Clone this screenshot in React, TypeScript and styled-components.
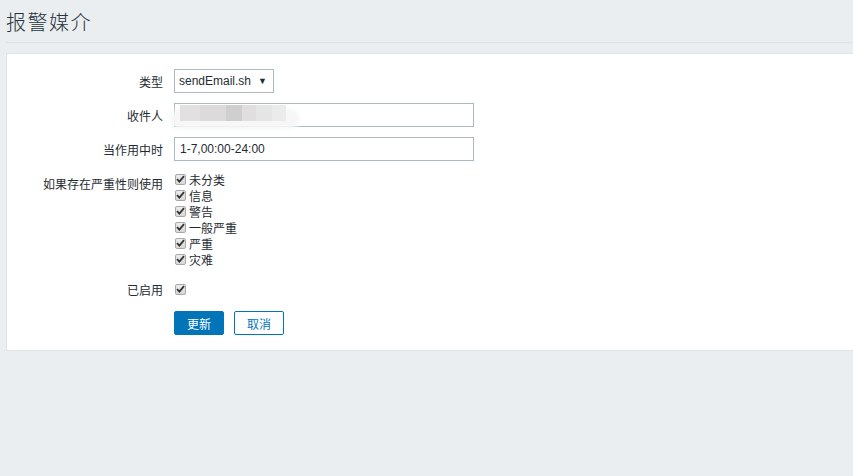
import React from "react";
import styled, { createGlobalStyle } from "styled-components";

const GlobalStyle = createGlobalStyle`
    html, body {
        margin: 0;
        padding: 0;
        background-color: #ebeef0;
    }
    body {
        font-family: Arial, "Liberation Sans", "Noto Sans CJK SC", sans-serif;
        font-size: 12px;
        color: #1f2c33;
    }
`;

const severities = ["未分类", "信息", "警告", "一般严重", "严重", "灾难"];

const CheckIcon = () => (
    <svg width="9" height="8" viewBox="0 0 9 8">
        <path d="M1 4.2 L3.4 6.6 L8 1.2" fill="none" stroke="#333" strokeWidth="1.8" />
    </svg>
);

const Checkbox = () => (
    <Box>
        <CheckIcon />
    </Box>
);

const App = () => {
    return (
        <>
            <GlobalStyle />
            <Page>
                <Header>
                    <Title>报警媒介</Title>
                </Header>
                <Panel>
                    <Form>
                        <Label>类型</Label>
                        <Field>
                            <Select>
                                <span>sendEmail.sh</span>
                                <Caret>▼</Caret>
                            </Select>
                        </Field>

                        <Label>收件人</Label>
                        <Field>
                            <InputWrap>
                                <Input />
                                <Redacted>
                                    <Smear />
                                    <Block tone="#e2e0e1" w={20} />
                                    <Block tone="#dcdadb" w={26} />
                                    <Block tone="#d0cfd0" w={16} />
                                    <Block tone="#e0dedf" w={14} />
                                    <Block tone="#e6e5e6" w={16} />
                                    <Block tone="#ecebec" w={14} />
                                </Redacted>
                            </InputWrap>
                        </Field>

                        <Label>当作用中时</Label>
                        <Field>
                            <Input>1-7,00:00-24:00</Input>
                        </Field>

                        <Label top>如果存在严重性则使用</Label>
                        <Field>
                            <CheckList>
                                {severities.map((name) => (
                                    <CheckRow key={name}>
                                        <Checkbox />
                                        <span>{name}</span>
                                    </CheckRow>
                                ))}
                            </CheckList>
                        </Field>

                        <Label>已启用</Label>
                        <Field>
                            <Checkbox />
                        </Field>

                        <span />
                        <Buttons>
                            <Button primary>更新</Button>
                            <Button>取消</Button>
                        </Buttons>
                    </Form>
                </Panel>
            </Page>
        </>
    );
};

export default App;

const Page = styled.div`
    width: 100%;
    min-height: 476px;
    padding: 0 0 0 6px;
    box-sizing: border-box;
    overflow: hidden;
`;

const Header = styled.div`
    height: 42px;
    border-bottom: 1px solid #dde2e5;
    display: flex;
    align-items: center;
    margin-bottom: 10px;
`;

const Title = styled.h1`
    margin: 0;
    font-family: "Noto Sans CJK SC", sans-serif;
    font-weight: 300;
    font-size: 20px;
    letter-spacing: 1.5px;
    color: #27343b;
    line-height: 1;
    padding-top: 2px;
`;

const Panel = styled.div`
    background-color: #ffffff;
    border: 1px solid #dfe4e7;
    border-right: none;
    width: 900px;
    box-sizing: border-box;
    padding: 15px 0 15px;
`;

const Form = styled.div`
    display: grid;
    grid-template-columns: 156px 1fr;
    column-gap: 11px;
    row-gap: 10px;
    align-items: center;
`;

const Label = styled.div<{ top?: boolean }>`
    text-align: right;
    font-family: "Noto Sans CJK SC", sans-serif;
    font-size: 12px;
    align-self: ${(p) => (p.top ? "start" : "center")};
    padding-top: ${(p) => (p.top ? "4px" : "0")};
`;

const Field = styled.div`
    display: flex;
    align-items: center;
    min-height: 24px;
`;

const Select = styled.div`
    width: 100px;
    height: 24px;
    box-sizing: border-box;
    border: 1px solid #acbbc2;
    display: flex;
    align-items: center;
    justify-content: space-between;
    padding: 0 6px 0 4px;
    font-size: 12px;
    color: #1f2c33;
`;

const Caret = styled.span`
    font-size: 9px;
`;

const InputWrap = styled.div`
    position: relative;
`;

const Input = styled.div`
    width: 300px;
    height: 24px;
    box-sizing: border-box;
    border: 1px solid #acbbc2;
    display: flex;
    align-items: center;
    padding: 0 5px;
    font-size: 12px;
    color: #1f2c33;
`;

const Redacted = styled.div`
    position: absolute;
    left: 6px;
    top: 2px;
    display: flex;
    height: 16px;
    filter: blur(0.6px);
`;

const Smear = styled.div`
    position: absolute;
    left: -10px;
    top: 4px;
    width: 130px;
    height: 20px;
    border-radius: 10px;
    background-color: #f7f7f8;
    filter: blur(2px);
`;

const Block = styled.div<{ tone: string; w: number }>`
    position: relative;
    width: ${(p) => p.w}px;
    height: 16px;
    background-color: ${(p) => p.tone};
`;

const CheckList = styled.div`
    display: flex;
    flex-direction: column;
`;

const CheckRow = styled.div`
    display: flex;
    align-items: center;
    height: 16px;
    gap: 3px;
    font-family: "Noto Sans CJK SC", sans-serif;
    font-size: 12px;
`;

const Box = styled.span`
    width: 11px;
    height: 11px;
    margin-left: 1px;
    box-sizing: border-box;
    border: 1px solid #a9a9a9;
    border-radius: 2px;
    background: linear-gradient(#ececec, #d8d8d8);
    display: inline-flex;
    align-items: center;
    justify-content: center;
`;

const Buttons = styled.div`
    display: flex;
    gap: 10px;
`;

const Button = styled.button<{ primary?: boolean }>`
    height: 24px;
    padding: 0 12px;
    border: 1px solid #0275b8;
    border-radius: 2px;
    background-color: ${(p) => (p.primary ? "#0275b8" : "#ffffff")};
    color: ${(p) => (p.primary ? "#ffffff" : "#0275b8")};
    font-family: "Noto Sans CJK SC", sans-serif;
    font-size: 12px;
    cursor: pointer;
`;
